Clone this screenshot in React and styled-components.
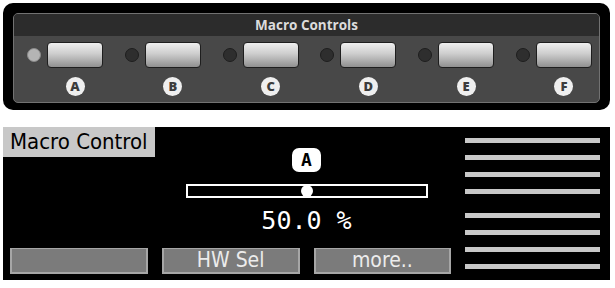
import styled, { createGlobalStyle } from "styled-components";

const macros = ["A", "B", "C", "D", "E", "F"];
const softButtons = ["", "HW Sel", "more.."];
const lineGroups = [4, 4];

export default function App() {
  return (
    <>
      <GlobalStyle />
      <Page>
        <Frame>
          <Panel>
            <PanelHeader>Macro Controls</PanelHeader>
            <PanelBody>
              {macros.map((m, i) => (
                <Macro key={m}>
                  <Led lit={i === 0} />
                  <MacroButton />
                  <MacroLabel>{m}</MacroLabel>
                </Macro>
              ))}
            </PanelBody>
          </Panel>
        </Frame>

        <Display>
          <ScreenTitle>Macro Control</ScreenTitle>
          <Center>
            <Badge>A</Badge>
            <Slider>
              <Knob style={{ left: "50%" }} />
            </Slider>
            <Value>50.0 %</Value>
          </Center>
          {softButtons.map((label, i) => (
            <SoftButton key={i} col={i + 1}>
              {label}
            </SoftButton>
          ))}
          <Lines>
            {lineGroups.map((count, g) => (
              <LineGroup key={g}>
                {Array.from({ length: count }).map((_, i) => (
                  <Line key={i} />
                ))}
              </LineGroup>
            ))}
          </Lines>
        </Display>
      </Page>
    </>
  );
}

const GlobalStyle = createGlobalStyle`
  body {
    margin: 0;
    background: #ffffff;
  }
`;

const Page = styled.div`
  width: 607px;
  padding: 3px;
  display: flex;
  flex-direction: column;
  gap: 17px;
`;

const Frame = styled.div`
  background: #000;
  border-radius: 10px;
  padding: 10px 10px 7px 10px;
`;

const Panel = styled.div`
  background: #484848;
  border: 1px solid #727272;
  border-radius: 5px;
  overflow: hidden;
`;

const PanelHeader = styled.div`
  height: 22px;
  background: #2c2c2c;
  color: #dcdcdc;
  font-family: "Open Sans", sans-serif;
  font-weight: 700;
  font-size: 13.5px;
  line-height: 22px;
  text-align: center;
`;

const PanelBody = styled.div`
  display: flex;
  justify-content: space-between;
  padding: 6px 7px 6px 13px;
`;

const Macro = styled.div`
  display: grid;
  grid-template-columns: 14px 56px;
  column-gap: 6px;
  row-gap: 9px;
`;

const Led = styled.div`
  width: 14px;
  height: 14px;
  border-radius: 50%;
  align-self: center;
  box-sizing: border-box;
  background: ${({ lit }) => (lit ? "#b4b4b4" : "#2e2e2e")};
  border: 1px solid ${({ lit }) => (lit ? "#8a8a8a" : "#1e1e1e")};
`;

const MacroButton = styled.div`
  height: 26px;
  box-sizing: border-box;
  border: 1px solid #1e1e1e;
  border-radius: 4px;
  background: linear-gradient(#efefef, #cdcdcd 45%, #909090);
`;

const MacroLabel = styled.div`
  grid-column: 2;
  justify-self: center;
  width: 19px;
  height: 19px;
  border-radius: 50%;
  background: #efefef;
  color: #3c3c3c;
  font-family: "Open Sans", sans-serif;
  font-weight: 800;
  font-size: 13px;
  line-height: 19px;
  text-align: center;
`;

const Display = styled.div`
  height: 153px;
  background: #000;
  display: grid;
  grid-template-columns: repeat(4, 1fr);
  grid-template-rows: 30px 1fr 32px;
  font-family: "DejaVu Sans Condensed", "DejaVu Sans", sans-serif;
`;

const ScreenTitle = styled.div`
  grid-column: 1;
  grid-row: 1;
  background: #c8c8c8;
  color: #000;
  font-size: 22px;
  line-height: 30px;
  padding-left: 7px;
  white-space: nowrap;
`;

const Center = styled.div`
  grid-column: 2 / 4;
  grid-row: 1 / 3;
  display: flex;
  flex-direction: column;
  align-items: center;
  padding-top: 21px;
`;

const Badge = styled.div`
  width: 29px;
  height: 24px;
  border-radius: 7px;
  background: #fff;
  color: #000;
  font-family: "DejaVu Sans Mono", monospace;
  font-weight: 700;
  font-size: 18px;
  line-height: 24px;
  text-align: center;
`;

const Slider = styled.div`
  position: relative;
  margin-top: 12px;
  width: 242px;
  height: 14px;
  box-sizing: border-box;
  border: 2px solid #fff;
`;

const Knob = styled.div`
  position: absolute;
  top: 50%;
  width: 12px;
  height: 12px;
  border-radius: 50%;
  background: #fff;
  transform: translate(-50%, -50%);
`;

const Value = styled.div`
  margin-top: 10px;
  color: #fff;
  font-family: "DejaVu Sans Mono", monospace;
  font-size: 25px;
  line-height: 26px;
  white-space: pre;
`;

const SoftButton = styled.div`
  grid-column: ${({ col }) => col};
  grid-row: 3;
  height: 26px;
  margin: 0 7px;
  box-sizing: border-box;
  background: #7b7b7b;
  border: 2px solid #a6a6a6;
  border-top-width: 1px;
  color: #ececec;
  font-size: 21px;
  line-height: 23px;
  text-align: center;
`;

const Lines = styled.div`
  grid-column: 4;
  grid-row: 1 / 4;
  display: flex;
  flex-direction: column;
  gap: 19px;
  padding: 11px 10px 0 7px;
`;

const LineGroup = styled.div`
  display: flex;
  flex-direction: column;
  gap: 12px;
`;

const Line = styled.div`
  height: 5px;
  background: #c8c8c8;
`;
